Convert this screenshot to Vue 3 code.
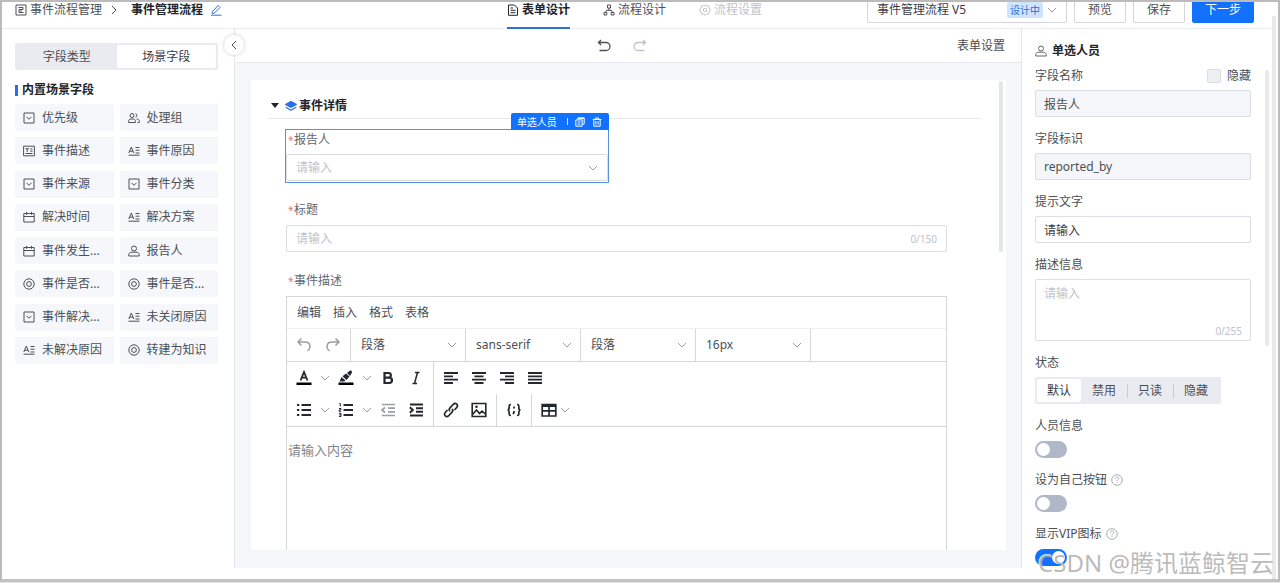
<script setup>
import { ref } from 'vue'

const steps = [
  { label: '表单设计', icon: 'doc', state: 'active' },
  { label: '流程设计', icon: 'flow', state: '' },
  { label: '流程设置', icon: 'gear', state: 'muted' },
]

const fields = [
  { label: '优先级', icon: 'select' },
  { label: '处理组', icon: 'group' },
  { label: '事件描述', icon: 'rich' },
  { label: '事件原因', icon: 'text' },
  { label: '事件来源', icon: 'select' },
  { label: '事件分类', icon: 'select' },
  { label: '解决时间', icon: 'calendar' },
  { label: '解决方案', icon: 'text' },
  { label: '事件发生...', icon: 'calendar' },
  { label: '报告人', icon: 'user' },
  { label: '事件是否...', icon: 'radio' },
  { label: '事件是否...', icon: 'radio' },
  { label: '事件解决...', icon: 'select' },
  { label: '未关闭原因', icon: 'text' },
  { label: '未解决原因', icon: 'text' },
  { label: '转建为知识', icon: 'radio' },
]

const menus = ['编辑', '插入', '格式', '表格']
const formats = [
  { name: '样式', value: '段落' },
  { name: '字体', value: 'sans-serif' },
  { name: '块', value: '段落' },
  { name: '字号', value: '16px' },
]
const aligns = [
  { name: '左对齐', icon: 'al' },
  { name: '居中', icon: 'ac' },
  { name: '右对齐', icon: 'ar' },
  { name: '两端对齐', icon: 'aj' },
]

const states = ['默认', '禁用', '只读', '隐藏']
const state = ref('默认')
const hint = ref('请输入')
const switches = ref([
  { id: 'sw-info', label: '人员信息', help: false, on: false },
  { id: 'sw-self', label: '设为自己按钮', help: true, on: false },
  { id: 'sw-vip', label: '显示VIP图标', help: true, on: true },
])
</script>

<template>
  <div class="app">
    <svg class="sprite" aria-hidden="true">
      <symbol id="chev" viewBox="0 0 10 10"><path d="M1 3l4 4 4-4" class="ln" /></symbol>
      <symbol id="chev-l" viewBox="0 0 10 10"><path d="M7 1L3 5l4 4" class="ln" /></symbol>
      <symbol id="chev-r" viewBox="0 0 10 10"><path d="M3 1l4 4-4 4" class="ln" /></symbol>
      <symbol id="flowbox" viewBox="0 0 12 12"><path d="M1 1h10v10H1zM3.500 3.500H8v2H4v3h4.500M6 5.500v3" class="ln" /></symbol>
      <symbol id="pencil" viewBox="0 0 12 12"><path d="M2.500 7.500l5.500-6 2 2-5.500 5.500-2.500.5zM1 11.200h10.500" class="ln" /></symbol>
      <symbol id="doc" viewBox="0 0 12 12"><path d="M1.500 1h6l3 3v7.300h-9zM3.500 4H6M3.500 6.300h5M3.500 8.700h5" class="ln" /></symbol>
      <symbol id="flow" viewBox="0 0 12 12"><path d="M4.500 1h3v3h-3zM1 8.500h2.800v2.500H1zM8.200 8.500H11v2.500H8.200zM6 4v2.300M2.400 8.500l1.200-2.200h4.800l1.200 2.200" class="ln" /></symbol>
      <symbol id="gear" viewBox="0 0 12 12"><path d="M6 .8l1.500 1.200 2-.2.5 2 1.300 2.200L10 8.200l-.5 2-2-.2L6 11.200 4.500 10l-2 .2-.5-2L.7 6 2 3.800l.5-2 2 .2z" class="ln" /><circle cx="6" cy="6" r="1.800" class="ln" /></symbol>
      <symbol id="undo2" viewBox="0 0 14 14"><path d="M1.500 3.500H9a4 4 0 0 1 0 8H2.500M4 1L1.500 3.500 4 6" class="ln" stroke-width="1.300" /></symbol>
      <symbol id="redo2" viewBox="0 0 14 14"><path d="M12.500 3.500H5a4 4 0 0 0 0 8h6.500M10 1l2.500 2.500L10 6" class="ln" stroke-width="1.300" /></symbol>
      <symbol id="select" viewBox="0 0 12 12"><path d="M1 1h10v10H1zM3.500 4.800L6 7.300l2.500-2.500" class="ln" /></symbol>
      <symbol id="group" viewBox="0 0 12 12"><circle cx="4" cy="3.500" r="2" class="ln" /><path d="M.6 10.500V9.300c0-1.500 1-2.300 2.400-2.300h2c1.400 0 2.400.8 2.400 2.300v1.200zM7.500 1.600a2 2 0 0 1 0 3.800M8.500 7c1.700 0 2.900.9 2.900 2.300v1.200H9.500" class="ln" /></symbol>
      <symbol id="rich" viewBox="0 0 12 12"><path d="M.6 1.200h10.800v9.600H.6zM2.500 3.700h3.500M4.200 3.700V7M7.200 4h2.300M7.200 6.200h2.300M2.500 8.500h7" class="ln" /></symbol>
      <symbol id="text" viewBox="0 0 12 12"><path d="M.8 8L3.300 2 5.800 8M1.600 6.200H5M7.500 2.500h4M7.500 5.200h4M7.500 8h4M.5 10.200h11" class="ln" /></symbol>
      <symbol id="calendar" viewBox="0 0 12 12"><path d="M.8 2.500h10.400v8.500H.8zM.8 5.500h10.400M3.500 .8v3M8.500 .8v3" class="ln" /></symbol>
      <symbol id="user" viewBox="0 0 12 12"><circle cx="6" cy="3.500" r="2.500" class="ln" /><path d="M.8 11V9.700C.8 8 2.200 7.200 4 7.200h4c1.800 0 3.200.8 3.200 2.500V11z" class="ln" /></symbol>
      <symbol id="radio" viewBox="0 0 12 12"><circle cx="6" cy="6" r="5.200" class="ln" /><circle cx="6" cy="6" r="2.400" class="ln" /></symbol>
      <symbol id="layers" viewBox="0 0 12 12"><path d="M6 .8l5.800 3.200v1L6 8 .2 5V4z" fill="currentColor" /><path d="M.8 7.300L6 10.300l5.200-3" class="ln" stroke-width="1.200" /></symbol>
      <symbol id="copy" viewBox="0 0 12 12"><path d="M1 3.500h7.500V11H1zM3.500 3V1H11v7.500H9M3 6h3.500M3 8.500h3.500M3.500 2h7" class="ln" stroke-width="1.200" /></symbol>
      <symbol id="trash" viewBox="0 0 12 12"><path d="M.8 3h10.400M4 3V1.200h4V3M2.200 3v8h7.600V3M4.700 5v4M7.300 5v4" class="ln" stroke-width="1.200" /></symbol>
      <symbol id="undo" viewBox="0 0 16 16"><path d="M5.500 1.500L2 5l3.500 3.500M2 5h6.500c3.500 0 5.500 2 5.500 4.500S12.800 13 11.500 14" class="ln" stroke-width="1.500" /></symbol>
      <symbol id="redo" viewBox="0 0 16 16"><path d="M10.500 1.500L14 5l-3.500 3.500M14 5H7.500C4 5 2 7 2 9.500S3.200 13 4.500 14" class="ln" stroke-width="1.500" /></symbol>
      <symbol id="color" viewBox="0 0 16 16"><path d="M.5 12.500h15v2.500H.5z" fill="#000" /><path d="M4.500 10.500L8 2l3.500 8.500M5.700 7.700h4.600" class="ln" stroke-width="1.800" /></symbol>
      <symbol id="mark" viewBox="0 0 16 16"><path d="M.5 12.500h15v2.500H.5z" fill="#000" /><path d="M1.500 11.500l2-4.500 4 3.500-1.500 1zM4.500 6.200l3.500-2.700 3.500 3L8.500 10zM9 3L12 .6c1.200-.5 2.400.8 2 1.900L12 6z" fill="currentColor" /></symbol>
      <symbol id="bold" viewBox="0 0 16 16"><path d="M4.500 3h4a2.300 2.300 0 0 1 0 4.700h-4zM4.500 7.700h4.800a2.600 2.600 0 0 1 0 5.300H4.500z" class="ln" stroke-width="2.200" /></symbol>
      <symbol id="italic" viewBox="0 0 16 16"><path d="M7 2.500h4.500M4.500 13.500H9M9.500 2.500l-3 11" class="ln" stroke-width="1.500" /></symbol>
      <symbol id="al" viewBox="0 0 16 16"><path d="M1 3h14M1 6.300h9M1 9.700h14M1 13h9" class="ln" stroke-width="1.800" /></symbol>
      <symbol id="ac" viewBox="0 0 16 16"><path d="M1 3h14M3.500 6.300h9M1 9.700h14M3.500 13h9" class="ln" stroke-width="1.800" /></symbol>
      <symbol id="ar" viewBox="0 0 16 16"><path d="M1 3h14M6 6.300h9M1 9.700h14M6 13h9" class="ln" stroke-width="1.800" /></symbol>
      <symbol id="aj" viewBox="0 0 16 16"><path d="M1 3h14M1 6.300h14M1 9.700h14M1 13h14" class="ln" stroke-width="1.800" /></symbol>
      <symbol id="ul" viewBox="0 0 16 16"><path d="M1 3h2.200M1 8h2.200M1 13h2.200M5.500 3H15M5.500 8H15M5.500 13H15" class="ln" stroke-width="2" /></symbol>
      <symbol id="ol" viewBox="0 0 16 16"><path d="M5.500 3H15M5.500 8H15M5.500 13H15" class="ln" stroke-width="2" /><path d="M1.300 1.500h1v3M1 6.500h2v1.400H1.200v1.400H3M1 11.300h2v3.200H1M1.200 12.900H3" class="ln" stroke-width="1" /></symbol>
      <symbol id="outdent" viewBox="0 0 16 16"><path d="M2 2.500h13M8 6.200h7M8 9.800h7M2 13.500h13M5 5.500L2 8l3 2.500" class="ln" stroke-width="1.700" /></symbol>
      <symbol id="indent" viewBox="0 0 16 16"><path d="M2 2.500h13M8 6.200h7M8 9.800h7M2 13.500h13M1.800 5.300L4.800 8l-3 2.700" class="ln" stroke-width="2" /></symbol>
      <symbol id="link" viewBox="0 0 16 16"><path d="M7 9.200c-1-1-.9-2.400 0-3.300l3.300-3.600c1-1 2.500-1 3.400-.1s.9 2.300 0 3.300L11.500 8M9 6.800c1 1 .9 2.400 0 3.300l-3.300 3.600c-1 1-2.500 1-3.400.1s-.9-2.300 0-3.300L4.500 8" class="ln" stroke-width="1.700" /></symbol>
      <symbol id="image" viewBox="0 0 16 16"><path d="M1.200 1.500h13.600v13H1.200zM1.500 12.500l4-4.500 3 3.500 2.500-2.500 3.800 3.500" class="ln" stroke-width="1.600" /><circle cx="5.500" cy="4.800" r="1.300" fill="currentColor" /></symbol>
      <symbol id="code" viewBox="0 0 16 16"><path d="M5 2.500c-2 0-1.800 1-1.800 2.500S3 8 1.500 8c1.500 0 1.700 1.500 1.700 3S3 13.500 5 13.500M11 2.500c2 0 1.800 1 1.800 2.500S13 8 14.500 8c-1.500 0-1.700 1.500-1.700 3s.2 2.500-1.800 2.500M8 4.500v2M8 9v1.500l-1 1.500" class="ln" stroke-width="1.700" /></symbol>
      <symbol id="table" viewBox="0 0 16 16"><path d="M1.200 2.500h13.600v11.500H1.200zM1 8.800h14M8 4v10" class="ln" stroke-width="1.700" /><path d="M1 2h14v3H1z" fill="currentColor" /></symbol>
      <symbol id="help" viewBox="0 0 12 12"><circle cx="6" cy="6" r="5.300" class="ln" /><path d="M4.300 4.700c0-2.300 3.500-2.200 3.400-.1C7.600 5.800 6 5.800 6 7.300M6 8.300v1" class="ln" /></symbol>
    </svg>

    <header class="top">
      <nav class="crumbs">
        <svg class="i12"><use href="#flowbox" /></svg>
        <a href="#" class="crumb">事件流程管理</a>
        <svg class="i10"><use href="#chev-r" /></svg>
        <strong>事件管理流程</strong>
        <button class="plain blue" aria-label="编辑名称"><svg class="i12"><use href="#pencil" /></svg></button>
      </nav>
      <nav class="steps">
        <a v-for="s in steps" :key="s.label" href="#" class="step" :class="s.state">
          <svg class="i12"><use :href="'#' + s.icon" /></svg>{{ s.label }}
        </a>
      </nav>
      <div class="actions">
        <div class="version">
          <select aria-label="流程版本"><option>事件管理流程 V5</option></select>
          <span class="badge">设计中</span>
          <svg class="i10 grey"><use href="#chev" /></svg>
        </div>
        <button class="btn">预览</button>
        <button class="btn">保存</button>
        <button class="btn primary">下一步</button>
      </div>
    </header>

    <main class="body">
      <aside class="side">
        <div class="seg">
          <button>字段类型</button>
          <button class="on">场景字段</button>
        </div>
        <h2 class="side-title">内置场景字段</h2>
        <div class="tiles">
          <button v-for="(f, i) in fields" :key="i" class="tile">
            <svg class="i12"><use :href="'#' + f.icon" /></svg>{{ f.label }}
          </button>
        </div>
        <button class="collapse" aria-label="收起"><svg class="i10"><use href="#chev-l" /></svg></button>
      </aside>

      <section class="center">
        <div class="bar">
          <span></span>
          <div class="history">
            <button class="plain" aria-label="撤销"><svg class="i14"><use href="#undo2" /></svg></button>
            <button class="plain dim" aria-label="重做"><svg class="i14"><use href="#redo2" /></svg></button>
          </div>
          <button class="plain settings">表单设置</button>
        </div>
        <div class="canvas">
          <div class="card">
            <h2 class="section">
              <i class="tri"></i><svg class="i12 blue"><use href="#layers" /></svg>事件详情
            </h2>
            <div class="form">
              <div class="item picked">
                <div class="tag">
                  <span>单选人员</span><i></i>
                  <button class="plain" aria-label="复制"><svg class="i10"><use href="#copy" /></svg></button>
                  <button class="plain" aria-label="删除"><svg class="i10"><use href="#trash" /></svg></button>
                </div>
                <label class="lbl" for="reporter"><b>*</b>报告人</label>
                <div class="box">
                  <select id="reporter" class="ph"><option>请输入</option></select>
                  <svg class="i10 grey"><use href="#chev" /></svg>
                </div>
              </div>
              <div class="item">
                <label class="lbl" for="title"><b>*</b>标题</label>
                <div class="box">
                  <input id="title" type="text" placeholder="请输入">
                  <span class="count">0/150</span>
                </div>
              </div>
              <div class="item grow">
                <label class="lbl" for="desc"><b>*</b>事件描述</label>
                <div class="editor">
                  <div class="menu"><button v-for="m in menus" :key="m" class="plain">{{ m }}</button></div>
                  <div class="row formats">
                    <div class="grp">
                      <button class="tb faded" aria-label="撤销"><svg class="i16"><use href="#undo" /></svg></button>
                      <button class="tb faded" aria-label="重做"><svg class="i16"><use href="#redo" /></svg></button>
                    </div>
                    <div v-for="f in formats" :key="f.name" class="fmt">
                      <select :aria-label="f.name"><option>{{ f.value }}</option></select>
                      <svg class="i10 grey"><use href="#chev" /></svg>
                    </div>
                  </div>
                  <div class="tools">
                    <div class="row">
                      <div class="grp">
                        <button class="tb" aria-label="文字颜色"><svg class="i16"><use href="#color" /></svg></button>
                        <button class="ch" aria-label="更多颜色"><svg class="i10"><use href="#chev" /></svg></button>
                        <button class="tb" aria-label="背景颜色"><svg class="i16"><use href="#mark" /></svg></button>
                        <button class="ch" aria-label="更多背景"><svg class="i10"><use href="#chev" /></svg></button>
                        <button class="tb" aria-label="粗体"><svg class="i16"><use href="#bold" /></svg></button>
                        <button class="tb" aria-label="斜体"><svg class="i16"><use href="#italic" /></svg></button>
                      </div>
                      <div class="grp last">
                        <button v-for="a in aligns" :key="a.icon" class="tb" :aria-label="a.name"><svg class="i16"><use :href="'#' + a.icon" /></svg></button>
                      </div>
                    </div>
                    <div class="row">
                      <div class="grp">
                        <button class="tb" aria-label="项目符号"><svg class="i16"><use href="#ul" /></svg></button>
                        <button class="ch" aria-label="更多符号"><svg class="i10"><use href="#chev" /></svg></button>
                        <button class="tb" aria-label="编号列表"><svg class="i16"><use href="#ol" /></svg></button>
                        <button class="ch" aria-label="更多编号"><svg class="i10"><use href="#chev" /></svg></button>
                        <button class="tb faded" aria-label="减少缩进"><svg class="i16"><use href="#outdent" /></svg></button>
                        <button class="tb" aria-label="增加缩进"><svg class="i16"><use href="#indent" /></svg></button>
                      </div>
                      <div class="grp">
                        <button class="tb" aria-label="链接"><svg class="i16"><use href="#link" /></svg></button>
                        <button class="tb" aria-label="图片"><svg class="i16"><use href="#image" /></svg></button>
                      </div>
                      <div class="grp">
                        <button class="tb" aria-label="代码"><svg class="i16"><use href="#code" /></svg></button>
                      </div>
                      <div class="grp last">
                        <button class="tb wide" aria-label="表格"><svg class="i16"><use href="#table" /></svg><svg class="i10 grey"><use href="#chev" /></svg></button>
                      </div>
                    </div>
                  </div>
                  <textarea id="desc" placeholder="请输入内容"></textarea>
                </div>
              </div>
            </div>
            <div class="scroll"></div>
          </div>
        </div>
      </section>

      <aside class="props">
        <h2 class="props-title"><svg class="i12"><use href="#user" /></svg>单选人员</h2>
        <div class="prop">
          <div class="head">
            <label for="p-name">字段名称</label>
            <label class="hide"><input type="checkbox" disabled>隐藏</label>
          </div>
          <input id="p-name" class="inp" type="text" value="报告人" disabled>
        </div>
        <div class="prop">
          <div class="head"><label for="p-key">字段标识</label></div>
          <input id="p-key" class="inp" type="text" value="reported_by" disabled>
        </div>
        <div class="prop">
          <div class="head"><label for="p-hint">提示文字</label></div>
          <input id="p-hint" v-model="hint" class="inp" type="text">
        </div>
        <div class="prop">
          <div class="head"><label for="p-desc">描述信息</label></div>
          <div class="area">
            <textarea id="p-desc" placeholder="请输入"></textarea>
            <span class="count">0/255</span>
          </div>
        </div>
        <div class="prop" role="radiogroup" aria-label="状态">
          <div class="head">状态</div>
          <div class="states">
            <label v-for="s in states" :key="s" :class="{ on: s === state }">
              <input v-model="state" type="radio" name="state" :value="s">{{ s }}
            </label>
          </div>
        </div>
        <div v-for="s in switches" :key="s.id" class="prop">
          <div class="head">
            <label :for="s.id">{{ s.label }}</label>
            <svg v-if="s.help" class="i12 help"><use href="#help" /></svg>
          </div>
          <input :id="s.id" v-model="s.on" class="switch" type="checkbox" role="switch">
        </div>
        <div class="scroll"></div>
      </aside>
    </main>
    <div class="page-scroll"></div>
    <div class="mark">CSDN @腾讯蓝鲸智云</div>
  </div>
</template>

<style>
body {
  background: #e3e3e3;
}
</style>

<style scoped>
.app {
  position: relative;
  display: flex;
  flex-direction: column;
  box-sizing: border-box;
  height: calc(100vh - 1px);
  padding: 0 6px 11px 0;
  border: 2px solid #bbb;
  border-bottom: 3px solid #c2c2c2;
  overflow: hidden;
  background: #fff;
  color: #4d4f56;
  font: 12px/20px "Noto Sans", "Noto Sans CJK SC", sans-serif;
}
.app * {
  box-sizing: border-box;
}
.sprite {
  position: absolute;
  width: 0;
  height: 0;
}
.ln {
  fill: none;
  stroke: currentColor;
}
svg {
  flex: none;
}
.i10 { width: 10px; height: 10px; }
.i12 { width: 12px; height: 12px; }
.i14 { width: 14px; height: 14px; }
.i16 { width: 16px; height: 16px; }
.blue { color: #2a6fe8; }
.grey { color: #979ba5; }
a {
  color: inherit;
  text-decoration: none;
}
button,
input,
select,
textarea {
  margin: 0;
  padding: 0;
  border: 0;
  background: none;
  color: inherit;
  font: inherit;
  outline: 0;
}
select {
  flex: 1;
  min-width: 0;
  appearance: none;
}
textarea {
  display: block;
  resize: none;
}
::placeholder {
  color: #c0c3cb;
  opacity: 1;
}
h2 {
  margin: 0;
  color: #222429;
  font-size: 12px;
  font-weight: 700;
  line-height: 20px;
}
.plain {
  display: flex;
  align-items: center;
}

.top {
  display: grid;
  grid-template-rows: 100%;
  grid-template-columns: 1fr auto 1fr;
  align-items: end;
  flex: none;
  height: 27px;
  padding-right: 5px;
  overflow: hidden;
  box-shadow: inset 0 -1px #eaebf0;
}
.crumbs {
  display: flex;
  align-items: center;
  padding: 0 0 9px 13px;
}
.crumb {
  margin: 0 7px 0 3px;
}
.crumbs strong {
  margin: 0 7px 0 12px;
  color: #222429;
}
.steps {
  display: flex;
  gap: 33px;
}
.step {
  display: flex;
  align-items: center;
  gap: 3px;
  padding-bottom: 7px;
  border-bottom: 2px solid transparent;
}
.step.active {
  border-color: #2b74c9;
  color: #222429;
  font-weight: 700;
}
.step.muted {
  color: #bfc2ca;
}
.actions {
  display: flex;
  justify-content: flex-end;
  gap: 7px;
  padding: 0 13px 6px 0;
}
.version,
.btn {
  height: 27px;
  border: 1px solid #d4d6db;
  border-radius: 2px;
}
.version {
  display: flex;
  align-items: center;
  width: 200px;
  padding: 0 9px;
  color: #3b3d44;
}
.badge {
  margin-right: 4px;
  padding: 0 3px;
  border-radius: 2px;
  background: #cfe5ff;
  color: #2a6fd8;
  font-size: 10px;
  line-height: 16px;
}
.btn {
  padding: 0 13px;
}
.btn.primary {
  padding: 0 12px;
  border-color: #1272ff;
  background: #1272ff;
  color: #fff;
}

.body {
  display: flex;
  flex: 1;
  min-height: 0;
}
.side {
  position: relative;
  flex: none;
  width: 233px;
  padding: 14px 16px 0 13px;
  border-right: 1px solid #e6e8ed;
}
.seg {
  display: grid;
  grid-template-columns: 1fr 1fr;
  height: 27px;
  padding: 2px;
  border-radius: 2px;
  background: #eaebf0;
}
.seg .on {
  border-radius: 2px;
  background: #fff;
  color: #3b3d44;
}
.side-title {
  display: flex;
  align-items: center;
  gap: 4px;
  margin: 10px 0 4px;
}
.side-title::before {
  width: 3px;
  height: 11px;
  background: #2a6fe8;
  content: "";
}
.tiles {
  display: grid;
  grid-template-columns: 1fr 1fr;
  column-gap: 6px;
  align-content: space-between;
  height: 260px;
}
.tile {
  display: flex;
  align-items: center;
  gap: 7px;
  height: 27px;
  padding-left: 8px;
  border-radius: 2px;
  background: #f5f7fa;
  white-space: nowrap;
}
.collapse {
  position: absolute;
  z-index: 1;
  top: 6px;
  right: -10px;
  display: grid;
  place-items: center;
  width: 20px;
  height: 20px;
  border-radius: 50%;
  background: #fff;
  box-shadow: 0 0 4px #0003;
}

.center {
  display: flex;
  flex: 1;
  flex-direction: column;
  min-width: 0;
}
.bar {
  display: grid;
  grid-template-columns: 1fr auto 1fr;
  align-items: center;
  flex: none;
  height: 34px;
  padding-right: 16px;
  border-bottom: 1px solid #e6e8ed;
}
.history {
  display: flex;
  gap: 22px;
  padding-left: 3px;
}
.dim {
  color: #c0c3cb;
}
.settings {
  justify-self: end;
}
.canvas {
  display: flex;
  flex: 1;
  min-height: 0;
  padding: 17px 15px 18px 16px;
  background: #f4f6fa;
}
.card {
  position: relative;
  display: flex;
  flex: 1;
  flex-direction: column;
  padding: 13px 25px 0 17px;
  overflow: hidden;
  background: #fff;
}
.section {
  display: flex;
  align-items: center;
  flex: none;
  gap: 2px;
  height: 26px;
  padding-left: 3px;
  border-bottom: 1px solid #e8e9ed;
}
.tri {
  margin-right: 4px;
  border: 4px solid transparent;
  border-top: 5px solid #222429;
  border-bottom: 0;
}
.form {
  display: flex;
  flex: 1;
  flex-direction: column;
  gap: 19px;
  min-height: 0;
  padding: 10px 34px 0 18px;
}
.item.picked {
  position: relative;
  width: 49%;
  margin: 0 0 -3px -1px;
  border: 1px solid #5594d8;
  padding-bottom: 1px;
}
.item.picked .lbl {
  margin-bottom: 4px;
}
.item.picked + .item {
  margin-top: 1px;
}
.item.grow {
  display: flex;
  flex: 1;
  flex-direction: column;
  min-height: 0;
}
.tag {
  position: absolute;
  right: -1px;
  bottom: 100%;
  display: flex;
  align-items: center;
  gap: 7px;
  height: 17px;
  padding: 0 7px 0 6px;
  border-radius: 2px 2px 0 0;
  background: #1272ff;
  color: #fff;
  font-size: 10px;
}
.tag i {
  width: 1px;
  height: 7px;
  margin-left: 3px;
  background: #cfe2ff;
}
.lbl {
  display: block;
  margin-bottom: 5px;
  padding-left: 8px;
  line-height: 20px;
  color: #63656e;
}
.lbl b {
  float: left;
  width: 6px;
  margin-left: -6px;
  color: #e07a7a;
  font-size: 10px;
  font-weight: 400;
}
.box {
  display: flex;
  align-items: center;
  height: 27px;
  padding: 0 9px;
  border: 1px solid #dcdee5;
  border-radius: 2px;
}
.box input {
  flex: 1;
  min-width: 0;
}
.ph {
  color: #c0c3cb;
}
.count {
  color: #c0c3cb;
  font-size: 10px;
}
.editor {
  display: flex;
  flex: 1;
  flex-direction: column;
  min-height: 0;
  border: 1px solid #d4d6da;
  border-bottom: 0;
}
.menu {
  display: flex;
  flex: none;
  gap: 12px;
  height: 32px;
  padding-left: 10px;
  border-bottom: 1px solid #eeeff2;
}
.row {
  display: flex;
  flex: none;
  height: 32px;
}
.formats {
  height: 33px;
  border-bottom: 1px solid #d4d6da;
}
.formats .grp {
  gap: 1px;
}
.tools {
  flex: none;
  border-bottom: 1px solid #d4d6da;
}
.grp {
  display: flex;
  align-items: center;
  padding: 0 3px;
  border-right: 1px solid #d4d6da;
  color: #23272f;
}
.grp.last {
  border: 0;
}
.tb,
.ch {
  display: flex;
  align-items: center;
  justify-content: center;
  width: 28px;
  height: 28px;
}
.ch {
  width: 14px;
  color: #979ba5;
}
.wide {
  gap: 3px;
  width: 40px;
}
.faded {
  color: #9a9da3;
}
.fmt {
  display: flex;
  align-items: center;
  width: 115px;
  padding: 0 8px 0 10px;
  border-right: 1px solid #d4d6da;
}
.editor textarea {
  flex: 1;
  width: 100%;
  min-height: 0;
  padding: 13px 2px 0 1px;
  font-size: 13px;
}
.editor textarea::placeholder {
  color: #80838a;
}
.scroll,
.page-scroll {
  position: absolute;
  width: 4px;
  border-radius: 2px;
  background: #e4e5e8;
}
.card .scroll {
  top: 1px;
  right: 3px;
  height: 171px;
}

.props {
  position: relative;
  flex: none;
  width: 251px;
  padding: 12px 21px 0 13px;
  border-left: 1px solid #e6e8ed;
}
.props-title {
  display: flex;
  align-items: center;
  gap: 5px;
  margin-bottom: 5px;
}
.props-title svg {
  color: #63656e;
}
.prop {
  margin-bottom: 12px;
}
.head {
  display: flex;
  align-items: center;
  height: 20px;
  margin-bottom: 4px;
}
.hide {
  display: flex;
  align-items: center;
  gap: 6px;
  margin-left: auto;
}
.hide input {
  width: 14px;
  height: 14px;
  border: 1px solid #dcdee5;
  border-radius: 2px;
  appearance: none;
  background: #eeeff2;
}
.inp,
.area {
  display: block;
  width: 100%;
  height: 27px;
  padding: 0 8px;
  border: 1px solid #dcdee5;
  border-radius: 2px;
  color: #3b3d44;
}
.inp:disabled {
  background: #f4f6f9;
  color: #4d4f56;
}
.area {
  display: flex;
  flex-direction: column;
  height: 62px;
  padding-top: 4px;
}
.area textarea {
  flex: 1;
  min-height: 0;
}
.area .count {
  align-self: flex-end;
  line-height: 18px;
}
.states {
  display: inline-flex;
  align-items: center;
  height: 27px;
  padding: 2px;
  border-radius: 2px;
  background: #eaebf0;
  vertical-align: top;
}
.states label {
  display: flex;
  align-items: center;
  height: 14px;
  padding: 0 11px;
}
.states label + label + label {
  padding-left: 10px;
  border-left: 1px solid #c8cbd3;
}
.states .on {
  height: 23px;
  padding: 0 10px;
  border-radius: 2px;
  background: #fff;
  color: #3b3d44;
}
.states input {
  width: 0;
  height: 0;
  appearance: none;
}
.help {
  margin-left: 4px;
  color: #a9acb5;
}
.switch {
  display: block;
  width: 32px;
  height: 17px;
  margin-top: 5px;
  padding: 2px;
  border-radius: 9px;
  appearance: none;
  background: #b0b7c6;
}
.switch::before {
  display: block;
  width: 13px;
  height: 13px;
  border-radius: 50%;
  background: #fff;
  content: "";
}
.switch:checked {
  background: #1272ff;
}
.switch:checked::before {
  margin-left: auto;
}
.props .scroll {
  top: 41px;
  right: 3px;
  height: 276px;
  background: #e9eaee;
}
.page-scroll {
  top: 14px;
  right: 2px;
  bottom: 0;
  border-radius: 0;
  background: #e9e9eb;
}
.mark {
  position: absolute;
  right: 4px;
  bottom: 0;
  color: #a9a9a9cc;
  font-size: 24px;
  line-height: 32px;
  text-shadow: -1px -1px 0 #fffc;
  white-space: nowrap;
}
</style>
